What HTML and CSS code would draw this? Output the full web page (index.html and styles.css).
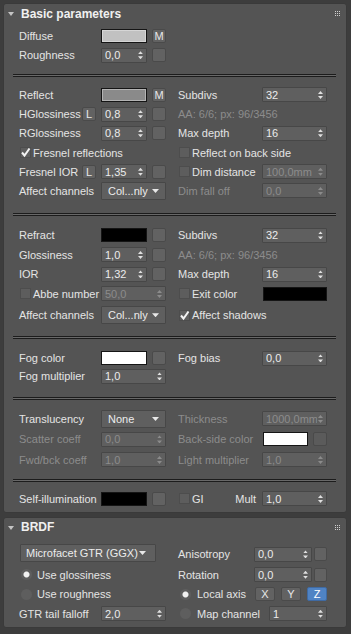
FILE: index.html
```html
<!DOCTYPE html>
<html lang="en">

<head>
    <meta charset="UTF-8">
    <meta name="viewport" content="width=device-width, initial-scale=1.0">
    <title>Material parameters</title>
    <link rel="stylesheet" href="styles.css">
</head>

<body>
    <div class="panel">
        <!-- Basic parameters rollout -->
        <div class="rollout">
            <div class="rollout-head">
                <span class="tri"></span>
                <span class="title">Basic parameters</span>
                <svg class="grip" width="5" height="5" viewBox="0 0 5 5">
                    <rect x="0" y="0" width="1" height="1" /><rect x="2" y="0" width="1" height="1" /><rect x="4" y="0" width="1" height="1" />
                    <rect x="0" y="2" width="1" height="1" /><rect x="2" y="2" width="1" height="1" /><rect x="4" y="2" width="1" height="1" />
                    <rect x="0" y="4" width="1" height="1" /><rect x="2" y="4" width="1" height="1" /><rect x="4" y="4" width="1" height="1" />
                </svg>
            </div>

            <div class="sec sec-basic">
                <div class="cell"><span class="lbl">Diffuse</span><span class="swatch light"></span><span class="btn">M</span></div>
                <div class="cell"></div>
                <div class="cell"><span class="lbl">Roughness</span><span class="spin"><span class="val">0,0</span><span class="arr"></span></span><span class="btn"></span></div>
                <div class="cell"></div>
            </div>
            <div class="sep"></div>

            <div class="sec sec-reflect">
                <div class="cell"><span class="lbl">Reflect</span><span class="swatch mid"></span><span class="btn">M</span></div>
                <div class="cell"><span class="rlbl">Subdivs</span><span class="spin wide"><span class="val">32</span><span class="arr"></span></span></div>

                <div class="cell"><span class="lbl short">HGlossiness</span><span class="btn lock">L</span><span class="spin"><span class="val">0,8</span><span class="arr"></span></span><span class="btn"></span></div>
                <div class="cell"><span class="note">AA: 6/6; px: 96/3456</span></div>

                <div class="cell"><span class="lbl">RGlossiness</span><span class="spin"><span class="val">0,8</span><span class="arr"></span></span><span class="btn"></span></div>
                <div class="cell"><span class="rlbl">Max depth</span><span class="spin wide"><span class="val">16</span><span class="arr"></span></span></div>

                <div class="cell"><span class="chk on"><svg width="11" height="11" viewBox="0 0 11 11"><path d="M2 5.5 L4.5 8.5 L9.5 1.5" /></svg></span><span class="chk-lbl">Fresnel reflections</span></div>
                <div class="cell"><span class="chk"></span><span class="chk-lbl">Reflect on back side</span></div>

                <div class="cell"><span class="lbl short">Fresnel IOR</span><span class="btn lock">L</span><span class="spin"><span class="val">1,35</span><span class="arr"></span></span><span class="btn"></span></div>
                <div class="cell"><span class="chk"></span><span class="chk-lbl grow">Dim distance</span><span class="spin wide off"><span class="val">100,0mm</span><span class="arr"></span></span></div>

                <div class="cell"><span class="lbl">Affect channels</span><span class="drop"><span class="val">Col...nly</span><span class="down"></span></span></div>
                <div class="cell"><span class="rlbl off">Dim fall off</span><span class="spin wide off"><span class="val">0,0</span><span class="arr"></span></span></div>
            </div>
            <div class="sep"></div>

            <div class="sec sec-refract">
                <div class="cell"><span class="lbl">Refract</span><span class="swatch black"></span><span class="btn"></span></div>
                <div class="cell"><span class="rlbl">Subdivs</span><span class="spin wide"><span class="val">32</span><span class="arr"></span></span></div>

                <div class="cell"><span class="lbl">Glossiness</span><span class="spin"><span class="val">1,0</span><span class="arr"></span></span><span class="btn"></span></div>
                <div class="cell"><span class="note">AA: 6/6; px: 96/3456</span></div>

                <div class="cell"><span class="lbl">IOR</span><span class="spin"><span class="val">1,32</span><span class="arr"></span></span><span class="btn"></span></div>
                <div class="cell"><span class="rlbl">Max depth</span><span class="spin wide"><span class="val">16</span><span class="arr"></span></span></div>

                <div class="cell"><span class="chk"></span><span class="chk-lbl fixed">Abbe number</span><span class="spin wide off"><span class="val">50,0</span><span class="arr"></span></span></div>
                <div class="cell"><span class="chk"></span><span class="chk-lbl grow">Exit color</span><span class="swatch black long"></span></div>

                <div class="cell"><span class="lbl">Affect channels</span><span class="drop"><span class="val">Col...nly</span><span class="down"></span></span></div>
                <div class="cell"><span class="chk on"><svg width="11" height="11" viewBox="0 0 11 11"><path d="M2 5.5 L4.5 8.5 L9.5 1.5" /></svg></span><span class="chk-lbl">Affect shadows</span></div>
            </div>
            <div class="sep"></div>

            <div class="sec sec-fog">
                <div class="cell"><span class="lbl">Fog color</span><span class="swatch white"></span><span class="btn"></span></div>
                <div class="cell"><span class="rlbl">Fog bias</span><span class="spin wide"><span class="val">0,0</span><span class="arr"></span></span></div>

                <div class="cell"><span class="lbl">Fog multiplier</span><span class="spin wide"><span class="val">1,0</span><span class="arr"></span></span></div>
                <div class="cell"></div>
            </div>
            <div class="sep"></div>

            <div class="sec sec-trans">
                <div class="cell"><span class="lbl">Translucency</span><span class="drop"><span class="val">None</span><span class="down"></span></span></div>
                <div class="cell"><span class="rlbl off">Thickness</span><span class="spin wide off"><span class="val">1000,0mm</span><span class="arr"></span></span></div>

                <div class="cell"><span class="lbl off">Scatter coeff</span><span class="spin wide off"><span class="val">0,0</span><span class="arr"></span></span></div>
                <div class="cell"><span class="rlbl off">Back-side color</span><span class="swatch white short"></span><span class="btn off"></span></div>

                <div class="cell"><span class="lbl off">Fwd/bck coeff</span><span class="spin wide off"><span class="val">1,0</span><span class="arr"></span></span></div>
                <div class="cell"><span class="rlbl off">Light multiplier</span><span class="spin wide off"><span class="val">1,0</span><span class="arr"></span></span></div>
            </div>
            <div class="sep"></div>

            <div class="sec sec-self">
                <div class="cell"><span class="lbl">Self-illumination</span><span class="swatch black"></span><span class="btn"></span></div>
                <div class="cell"><span class="chk"></span><span class="chk-lbl grow">GI</span><span class="mult">Mult</span><span class="spin wide"><span class="val">1,0</span><span class="arr"></span></span></div>
            </div>
        </div>

        <!-- BRDF rollout -->
        <div class="rollout">
            <div class="rollout-head">
                <span class="tri"></span>
                <span class="title">BRDF</span>
                <svg class="grip" width="5" height="5" viewBox="0 0 5 5">
                    <rect x="0" y="0" width="1" height="1" /><rect x="2" y="0" width="1" height="1" /><rect x="4" y="0" width="1" height="1" />
                    <rect x="0" y="2" width="1" height="1" /><rect x="2" y="2" width="1" height="1" /><rect x="4" y="2" width="1" height="1" />
                    <rect x="0" y="4" width="1" height="1" /><rect x="2" y="4" width="1" height="1" /><rect x="4" y="4" width="1" height="1" />
                </svg>
            </div>

            <div class="sec sec-brdf">
                <div class="cell top"><span class="drop brdf"><span class="val">Microfacet GTR (GGX)</span><span class="down"></span></span></div>
                <div class="cell"><span class="blbl">Anisotropy</span><span class="spin mid"><span class="val">0,0</span><span class="arr"></span></span><span class="btn tight"></span></div>

                <div class="cell"><span class="radio on"></span><span class="radio-lbl">Use glossiness</span></div>
                <div class="cell"><span class="blbl">Rotation</span><span class="spin mid"><span class="val">0,0</span><span class="arr"></span></span><span class="btn tight"></span></div>

                <div class="cell"><span class="radio"></span><span class="radio-lbl">Use roughness</span></div>
                <div class="cell axis-row"><span class="radio on"></span><span class="radio-lbl grow">Local axis</span><span class="axis">X</span><span class="axis">Y</span><span class="axis on">Z</span></div>

                <div class="cell"><span class="lbl">GTR tail falloff</span><span class="spin wide"><span class="val">2,0</span><span class="arr"></span></span></div>
                <div class="cell axis-row"><span class="radio"></span><span class="radio-lbl grow">Map channel</span><span class="spin chan"><span class="val">1</span><span class="arr"></span></span></div>
            </div>
        </div>
    </div>
</body>

</html>
```

FILE: styles.css
```css
* {
    box-sizing: border-box;
}

body {
    margin: 0;
    width: 351px;
    height: 634px;
    overflow: hidden;
    background-color: #3d3d3d;
    font-family: "Liberation Sans", Arial, sans-serif;
    font-size: 11px;
    color: #e4e4e4;
}

.panel {
    padding: 3px 4px 0 3px;
}

.rollout {
    background-color: #545454;
    border: 1px solid #3a3a3a;
    border-radius: 3px;
    margin-bottom: 4px;
}

.rollout-head {
    display: flex;
    align-items: center;
    height: 19px;
    padding: 0 6px 0 4px;
}

.tri {
    width: 0;
    height: 0;
    border-left: 3px solid transparent;
    border-right: 3px solid transparent;
    border-top: 4px solid #c4c4c4;
    margin: 1px 7px 0 0;
}

.title {
    flex: 1;
    font-size: 12px;
    font-weight: bold;
    color: #f0f0f0;
}

.grip {
    fill: #cfcfcf;
}

/* sections */

.sec {
    display: grid;
    grid-template-columns: 159px 149px;
    padding-left: 15px;
}

.sec-basic {
    grid-auto-rows: 19.5px;
    padding-top: 3px;
    padding-bottom: 9px;
}

.sec-reflect {
    grid-auto-rows: 19.2px;
    padding-top: 8.4px;
    padding-bottom: 12.4px;
}

.sec-refract {
    grid-template-rows: repeat(4, 19.5px) 23px;
    padding-top: 9.75px;
    padding-bottom: 9.25px;
}

.sec-fog {
    grid-auto-rows: 18px;
    padding-top: 10.5px;
    padding-bottom: 11.5px;
}

.sec-trans {
    grid-auto-rows: 20.5px;
    padding-top: 8.75px;
    padding-bottom: 8.75px;
}

.sec-self {
    grid-auto-rows: 19px;
    padding-top: 7.5px;
    padding-bottom: 3.5px;
}

.sec-brdf {
    grid-template-rows: 21px repeat(3, 19.5px);
    padding-top: 7px;
    padding-bottom: 4px;
}

.sep {
    height: 3px;
    margin: 0 10px 0 9px;
    background-color: #686868;
    border-top: 1px solid #1c1c1c;
    border-bottom: 1px solid #1c1c1c;
}

.cell {
    display: flex;
    align-items: center;
    min-width: 0;
}

.cell.top {
    align-items: flex-start;
}

/* labels */

.lbl {
    width: 82px;
    flex-shrink: 0;
    white-space: nowrap;
}

.lbl.short {
    width: 63px;
}

.rlbl {
    width: 84px;
    flex-shrink: 0;
    white-space: nowrap;
}

.blbl {
    width: 76px;
    flex-shrink: 0;
}

.off {
    color: #8c8c8c;
}

.note {
    color: #8c8c8c;
}

.chk-lbl,
.radio-lbl {
    white-space: nowrap;
}

.chk-lbl.fixed {
    width: 68px;
    flex-shrink: 0;
}

.grow {
    flex: 1;
}

.mult {
    margin-right: 6px;
}

/* controls */

.swatch {
    width: 46px;
    height: 14px;
    border: 1px solid #151515;
    box-shadow: inset 0 0 0 1px rgba(255, 255, 255, 0.35);
}

.swatch.light {
    background-color: #c1c1c1;
}

.swatch.mid {
    background-color: #8a8a8a;
}

.swatch.black {
    background-color: #000;
    box-shadow: none;
}

.swatch.white {
    background-color: #fff;
    box-shadow: none;
}

.swatch.long {
    width: 64px;
    margin-left: 1px;
}

.swatch.short {
    width: 45px;
    margin-left: 1px;
}

.btn {
    width: 14px;
    height: 14px;
    margin-left: 5px;
    border: 1px solid #4a4a4a;
    border-radius: 2px;
    background-color: #626262;
    display: flex;
    align-items: center;
    justify-content: center;
    font-size: 11px;
    color: #e8e8e8;
}

.btn.lock {
    margin: 0 5px 0 0;
}

.btn.tight {
    width: 13px;
    margin-left: 2px;
}

.btn.off {
    background-color: #5b5b5b;
}

.spin {
    width: 46px;
    height: 15px;
    display: flex;
    align-items: center;
    padding: 0 3px 0 3px;
    border: 1px solid #474747;
    border-radius: 1px;
    background-color: #5f5f5f;
    color: #ececec;
}

.spin.wide {
    width: 65px;
}

.spin.mid {
    width: 58px;
}

.spin.chan {
    width: 58px;
}

.spin.off {
    color: #8c8c8c;
}

.val {
    flex: 1;
    overflow: hidden;
    white-space: nowrap;
}

.arr {
    display: flex;
    flex-direction: column;
    gap: 2px;
    margin-left: 1px;
}

.arr::before,
.arr::after {
    content: "";
    width: 5px;
    height: 3px;
    background-color: #e0e0e0;
}

.arr::before {
    clip-path: polygon(50% 0, 100% 100%, 0 100%);
}

.arr::after {
    clip-path: polygon(0 0, 100% 0, 50% 100%);
}

.spin.off .arr::before,
.spin.off .arr::after {
    background-color: #8c8c8c;
}

.drop {
    width: 65px;
    height: 18px;
    display: flex;
    align-items: center;
    padding: 0 6px 0 6px;
    border: 1px solid #474747;
    border-radius: 1px;
    background-color: #5f5f5f;
    color: #ececec;
}

.drop.brdf {
    width: 136px;
    margin-left: 1px;
    padding-left: 5px;
    padding-right: 9px;
}

.down {
    width: 7px;
    height: 4px;
    background-color: #e8e8e8;
    clip-path: polygon(0 0, 100% 0, 50% 100%);
}

.chk {
    width: 11px;
    height: 11px;
    margin: 0 2px 0 1px;
    background-color: #5d5d5d;
    border: 1px solid #4d4d4d;
    flex-shrink: 0;
}

.chk svg {
    display: block;
    margin: -1px;
}

.chk path {
    fill: none;
    stroke: #f2f2f2;
    stroke-width: 2;
}

.radio {
    width: 11px;
    height: 11px;
    margin: 0 5px 0 2px;
    border-radius: 50%;
    background-color: #5e5e5e;
    flex-shrink: 0;
}

.radio.on {
    background: radial-gradient(circle, #f2f2f2 0 2.5px, #5e5e5e 3.5px);
}

.axis-row .radio {
    margin-left: 2px;
    margin-right: 6px;
}

.axis {
    width: 20px;
    height: 14px;
    margin-left: 6px;
    display: flex;
    align-items: center;
    justify-content: center;
    border: 1px solid #4a4a4a;
    border-radius: 2px;
    background-color: #626262;
    color: #e8e8e8;
}

.axis:first-of-type {
    margin-left: 0;
}

.axis.on {
    background-color: #4f83c4;
    border-color: #3f6aa3;
    color: #fff;
}
```
